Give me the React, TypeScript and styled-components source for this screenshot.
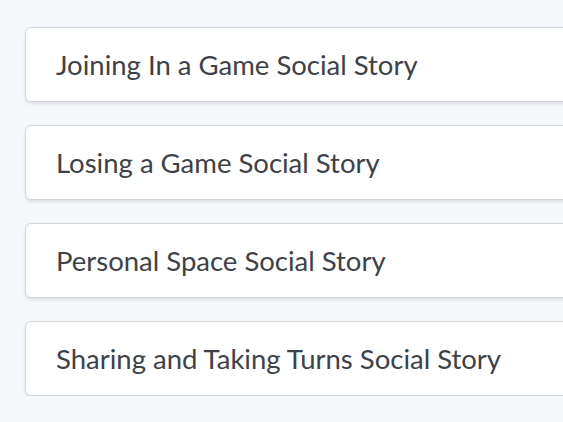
import React from "react";
import styled, { createGlobalStyle } from "styled-components";

const Global = createGlobalStyle`
  html, body { margin: 0; padding: 0; background: #f4f8fb; overflow: hidden; }
  body { font-family: "Lato", "Open Sans", sans-serif; }
`;

const List = styled.div`
  display: flex;
  flex-direction: column;
  gap: 23px;
  padding: 27px 0 0 25px;
  width: 600px;
`;

const Card = styled.div`
  box-sizing: border-box;
  height: 75px;
  display: flex;
  align-items: center;
  padding-left: 30px;
  background: #ffffff;
  border: 1px solid #d3d7dc;
  border-radius: 6px;
  box-shadow: 0 2px 3px rgba(60, 70, 80, 0.12);
`;

const Title = styled.span`
  font-size: 27.5px;
  color: #3d4249;
  white-space: nowrap;
`;

const stories = [
  "Joining In a Game Social Story",
  "Losing a Game Social Story",
  "Personal Space Social Story",
  "Sharing and Taking Turns Social Story",
];

export default function App() {
  return (
    <>
      <Global />
      <List>
        {stories.map((s) => (
          <Card key={s}>
            <Title>{s}</Title>
          </Card>
        ))}
      </List>
    </>
  );
}
